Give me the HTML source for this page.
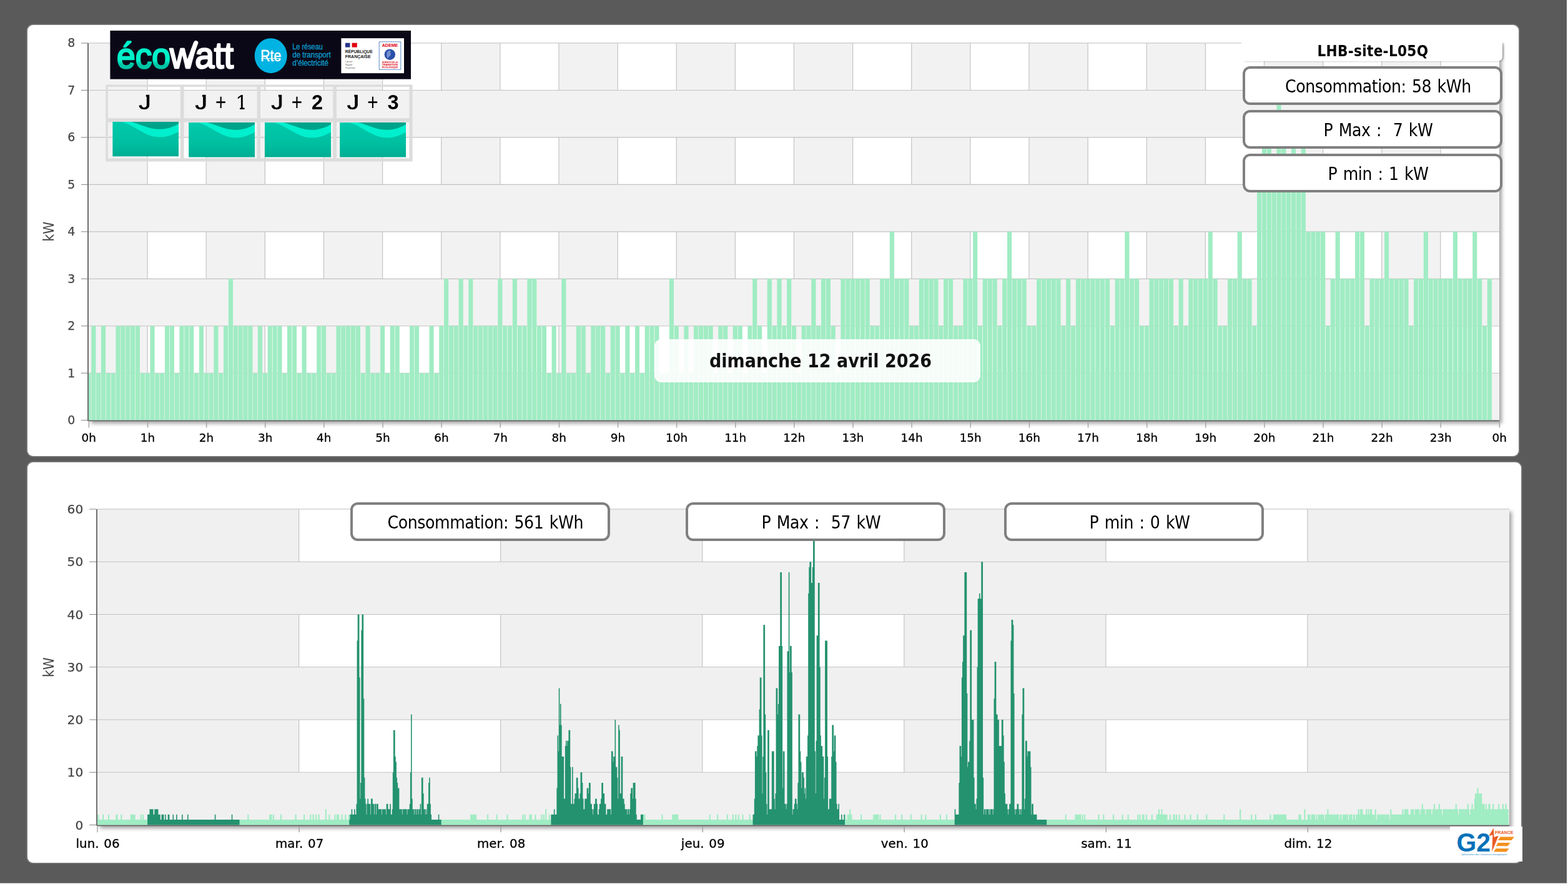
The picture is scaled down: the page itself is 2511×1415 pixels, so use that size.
<!DOCTYPE html>
<html lang="fr"><head><meta charset="utf-8"><title>Suivi consommation - LHB-site-L05Q</title>
<style>
html,body{margin:0;padding:0;}
body{width:2511px;height:1415px;overflow:hidden;background:#5a5a5a;position:relative;font-family:"DejaVu Sans Condensed","DejaVu Sans","Liberation Sans",sans-serif;}
.panel{position:absolute;background:#fff;border-radius:9px;box-shadow:0 0 0 1.6px #7d7d7d;}
#p1{left:43.8px;top:40px;width:2388.6px;height:690px;}
#p2{left:43.8px;top:740px;width:2392.4px;height:641px;}
.pshadow{position:absolute;box-shadow:4px 4px 6px rgba(0,0,0,.36);background:#fff;}
svg.chart{position:absolute;left:0;top:0;}
.stat,.gs{filter:grayscale(1);}
svg .gs{filter:grayscale(1);}
.stat{position:absolute;box-sizing:border-box;width:416px;height:62px;border:4px solid #808080;border-radius:12px;background:#fff;color:#000;font-size:28px;font-stretch:condensed;line-height:54px;white-space:pre;letter-spacing:-.4px;word-spacing:1.8px;}
.stat span{position:absolute;top:2px;}
.edge-r{position:absolute;right:0;top:0;width:1.9px;height:100%;background:#fff}
.edge-b{position:absolute;left:0;bottom:0;height:1px;width:100%;background:#fff}
</style></head><body>
<div class="panel" id="p1"></div><div class="panel" id="p2"></div>
<div class="pshadow" style="left:142px;top:69px;width:2259px;height:604.7px"></div>
<div class="pshadow" style="left:155.6px;top:815px;width:2261.4px;height:506.5px"></div>
<svg class="chart" width="2511" height="1415" viewBox="0 0 2511 1415">
<rect x="142" y="69" width="2259" height="603.7" fill="#fff"/>
<rect x="142" y="69" width="94.12" height="603.7" fill="#f2f2f2"/>
<rect x="330.25" y="69" width="94.12" height="603.7" fill="#f2f2f2"/>
<rect x="518.5" y="69" width="94.12" height="603.7" fill="#f2f2f2"/>
<rect x="706.75" y="69" width="94.12" height="603.7" fill="#f2f2f2"/>
<rect x="895" y="69" width="94.12" height="603.7" fill="#f2f2f2"/>
<rect x="1083.25" y="69" width="94.12" height="603.7" fill="#f2f2f2"/>
<rect x="1271.5" y="69" width="94.12" height="603.7" fill="#f2f2f2"/>
<rect x="1459.75" y="69" width="94.12" height="603.7" fill="#f2f2f2"/>
<rect x="1648" y="69" width="94.12" height="603.7" fill="#f2f2f2"/>
<rect x="1836.25" y="69" width="94.12" height="603.7" fill="#f2f2f2"/>
<rect x="2024.5" y="69" width="94.12" height="603.7" fill="#f2f2f2"/>
<rect x="2212.75" y="69" width="94.12" height="603.7" fill="#f2f2f2"/>
<path d="M236.12 69V672.7M330.25 69V672.7M424.38 69V672.7M518.5 69V672.7M612.62 69V672.7M706.75 69V672.7M800.88 69V672.7M895 69V672.7M989.12 69V672.7M1083.25 69V672.7M1177.38 69V672.7M1271.5 69V672.7M1365.62 69V672.7M1459.75 69V672.7M1553.88 69V672.7M1648 69V672.7M1742.12 69V672.7M1836.25 69V672.7M1930.38 69V672.7M2024.5 69V672.7M2118.62 69V672.7M2212.75 69V672.7M2306.88 69V672.7" stroke="#c2c2c2" stroke-width="1.15" fill="none"/>
<rect x="142" y="597.24" width="2259" height="75.46" fill="#f2f2f2"/>
<rect x="142" y="446.31" width="2259" height="75.46" fill="#f2f2f2"/>
<rect x="142" y="295.39" width="2259" height="75.46" fill="#f2f2f2"/>
<rect x="142" y="144.46" width="2259" height="75.46" fill="#f2f2f2"/>
<path d="M142 672.7H2401M142 597.24H2401M142 521.78H2401M142 446.31H2401M142 370.85H2401M142 295.39H2401M142 219.93H2401M142 144.46H2401M142 69H2401" stroke="#c2c2c2" stroke-width="1.15" fill="none"/>
<path d="M142 672.7V597.24H145.57V672.7zM146.27 672.7V521.78H153.42V672.7zM154.12 672.7V597.24H161.26V672.7zM161.96 672.7V521.78H169.1V672.7zM169.8 672.7V597.24H176.95V672.7zM177.65 672.7V597.24H184.79V672.7zM185.49 672.7V521.78H192.63V672.7zM193.33 672.7V521.78H200.48V672.7zM201.18 672.7V521.78H208.32V672.7zM209.02 672.7V521.78H216.17V672.7zM216.87 672.7V521.78H224.01V672.7zM224.71 672.7V597.24H231.85V672.7zM232.55 672.7V597.24H239.7V672.7zM240.4 672.7V521.78H247.54V672.7zM248.24 672.7V597.24H255.38V672.7zM256.08 672.7V597.24H263.23V672.7zM263.93 672.7V521.78H271.07V672.7zM271.77 672.7V521.78H278.92V672.7zM279.62 672.7V597.24H286.76V672.7zM287.46 672.7V521.78H294.6V672.7zM295.3 672.7V521.78H302.45V672.7zM303.15 672.7V521.78H310.29V672.7zM310.99 672.7V597.24H318.13V672.7zM318.83 672.7V521.78H325.98V672.7zM326.68 672.7V597.24H333.82V672.7zM334.52 672.7V597.24H341.67V672.7zM342.37 672.7V521.78H349.51V672.7zM350.21 672.7V597.24H357.35V672.7zM358.05 672.7V521.78H365.2V672.7zM365.9 672.7V446.31H373.04V672.7zM373.74 672.7V521.78H380.88V672.7zM381.58 672.7V521.78H388.73V672.7zM389.43 672.7V521.78H396.57V672.7zM397.27 672.7V521.78H404.42V672.7zM405.12 672.7V597.24H412.26V672.7zM412.96 672.7V521.78H420.1V672.7zM420.8 672.7V597.24H427.95V672.7zM428.65 672.7V521.78H435.79V672.7zM436.49 672.7V521.78H443.63V672.7zM444.33 672.7V521.78H451.48V672.7zM452.18 672.7V597.24H459.32V672.7zM460.02 672.7V521.78H467.17V672.7zM467.87 672.7V521.78H475.01V672.7zM475.71 672.7V597.24H482.85V672.7zM483.55 672.7V521.78H490.7V672.7zM491.4 672.7V597.24H498.54V672.7zM499.24 672.7V597.24H506.38V672.7zM507.08 672.7V521.78H514.23V672.7zM514.93 672.7V521.78H522.07V672.7zM522.77 672.7V597.24H529.92V672.7zM530.62 672.7V597.24H537.76V672.7zM538.46 672.7V521.78H545.6V672.7zM546.3 672.7V521.78H553.45V672.7zM554.15 672.7V521.78H561.29V672.7zM561.99 672.7V521.78H569.13V672.7zM569.83 672.7V521.78H576.98V672.7zM577.68 672.7V597.24H584.82V672.7zM585.52 672.7V521.78H592.67V672.7zM593.37 672.7V597.24H600.51V672.7zM601.21 672.7V597.24H608.35V672.7zM609.05 672.7V521.78H616.2V672.7zM616.9 672.7V597.24H624.04V672.7zM624.74 672.7V521.78H631.88V672.7zM632.58 672.7V521.78H639.73V672.7zM640.43 672.7V597.24H647.57V672.7zM648.27 672.7V597.24H655.42V672.7zM656.12 672.7V521.78H663.26V672.7zM663.96 672.7V521.78H671.1V672.7zM671.8 672.7V597.24H678.95V672.7zM679.65 672.7V597.24H686.79V672.7zM687.49 672.7V521.78H694.63V672.7zM695.33 672.7V597.24H702.48V672.7zM703.18 672.7V521.78H710.32V672.7zM711.02 672.7V446.31H718.17V672.7zM718.87 672.7V521.78H726.01V672.7zM726.71 672.7V521.78H733.85V672.7zM734.55 672.7V446.31H741.7V672.7zM742.4 672.7V521.78H749.54V672.7zM750.24 672.7V446.31H757.38V672.7zM758.08 672.7V521.78H765.23V672.7zM765.93 672.7V521.78H773.07V672.7zM773.77 672.7V521.78H780.92V672.7zM781.62 672.7V521.78H788.76V672.7zM789.46 672.7V521.78H796.6V672.7zM797.3 672.7V446.31H804.45V672.7zM805.15 672.7V521.78H812.29V672.7zM812.99 672.7V521.78H820.13V672.7zM820.83 672.7V446.31H827.98V672.7zM828.68 672.7V521.78H835.82V672.7zM836.52 672.7V521.78H843.67V672.7zM844.37 672.7V446.31H851.51V672.7zM852.21 672.7V446.31H859.35V672.7zM860.05 672.7V521.78H867.2V672.7zM867.9 672.7V521.78H875.04V672.7zM875.74 672.7V597.24H882.88V672.7zM883.58 672.7V521.78H890.73V672.7zM891.43 672.7V597.24H898.57V672.7zM899.27 672.7V446.31H906.42V672.7zM907.12 672.7V597.24H914.26V672.7zM914.96 672.7V597.24H922.1V672.7zM922.8 672.7V521.78H929.95V672.7zM930.65 672.7V521.78H937.79V672.7zM938.49 672.7V597.24H945.63V672.7zM946.33 672.7V521.78H953.48V672.7zM954.18 672.7V521.78H961.32V672.7zM962.02 672.7V521.78H969.17V672.7zM969.87 672.7V597.24H977.01V672.7zM977.71 672.7V521.78H984.85V672.7zM985.55 672.7V521.78H992.7V672.7zM993.4 672.7V597.24H1000.54V672.7zM1001.24 672.7V521.78H1008.38V672.7zM1009.08 672.7V597.24H1016.23V672.7zM1016.93 672.7V521.78H1024.07V672.7zM1024.77 672.7V597.24H1031.92V672.7zM1032.62 672.7V521.78H1039.76V672.7zM1040.46 672.7V521.78H1047.6V672.7zM1048.3 672.7V521.78H1055.45V672.7zM1056.15 672.7V597.24H1063.29V672.7zM1063.99 672.7V597.24H1071.13V672.7zM1071.83 672.7V446.31H1078.98V672.7zM1079.68 672.7V521.78H1086.82V672.7zM1087.52 672.7V597.24H1094.67V672.7zM1095.37 672.7V521.78H1102.51V672.7zM1103.21 672.7V597.24H1110.35V672.7zM1111.05 672.7V521.78H1118.2V672.7zM1118.9 672.7V521.78H1126.04V672.7zM1126.74 672.7V521.78H1133.88V672.7zM1134.58 672.7V521.78H1141.73V672.7zM1142.43 672.7V597.24H1149.57V672.7zM1150.27 672.7V521.78H1157.42V672.7zM1158.12 672.7V521.78H1165.26V672.7zM1165.96 672.7V597.24H1173.1V672.7zM1173.8 672.7V521.78H1180.95V672.7zM1181.65 672.7V521.78H1188.79V672.7zM1189.49 672.7V597.24H1196.63V672.7zM1197.33 672.7V521.78H1204.48V672.7zM1205.18 672.7V446.31H1212.32V672.7zM1213.02 672.7V521.78H1220.17V672.7zM1220.87 672.7V597.24H1228.01V672.7zM1228.71 672.7V446.31H1235.85V672.7zM1236.55 672.7V521.78H1243.7V672.7zM1244.4 672.7V446.31H1251.54V672.7zM1252.24 672.7V521.78H1259.38V672.7zM1260.08 672.7V446.31H1267.23V672.7zM1267.93 672.7V521.78H1275.07V672.7zM1275.77 672.7V597.24H1282.92V672.7zM1283.62 672.7V521.78H1290.76V672.7zM1291.46 672.7V521.78H1298.6V672.7zM1299.3 672.7V446.31H1306.45V672.7zM1307.15 672.7V521.78H1314.29V672.7zM1314.99 672.7V446.31H1322.13V672.7zM1322.83 672.7V446.31H1329.98V672.7zM1330.68 672.7V521.78H1337.82V672.7zM1338.52 672.7V597.24H1345.67V672.7zM1346.37 672.7V446.31H1353.51V672.7zM1354.21 672.7V446.31H1361.35V672.7zM1362.05 672.7V446.31H1369.2V672.7zM1369.9 672.7V446.31H1377.04V672.7zM1377.74 672.7V446.31H1384.88V672.7zM1385.58 672.7V446.31H1392.73V672.7zM1393.43 672.7V521.78H1400.57V672.7zM1401.27 672.7V521.78H1408.42V672.7zM1409.12 672.7V446.31H1416.26V672.7zM1416.96 672.7V446.31H1424.1V672.7zM1424.8 672.7V370.85H1431.95V672.7zM1432.65 672.7V446.31H1439.79V672.7zM1440.49 672.7V446.31H1447.63V672.7zM1448.33 672.7V446.31H1455.48V672.7zM1456.18 672.7V521.78H1463.32V672.7zM1464.02 672.7V521.78H1471.17V672.7zM1471.87 672.7V446.31H1479.01V672.7zM1479.71 672.7V446.31H1486.85V672.7zM1487.55 672.7V446.31H1494.7V672.7zM1495.4 672.7V446.31H1502.54V672.7zM1503.24 672.7V521.78H1510.38V672.7zM1511.08 672.7V446.31H1518.23V672.7zM1518.93 672.7V446.31H1526.07V672.7zM1526.77 672.7V521.78H1533.92V672.7zM1534.62 672.7V521.78H1541.76V672.7zM1542.46 672.7V446.31H1549.6V672.7zM1550.3 672.7V446.31H1557.45V672.7zM1558.15 672.7V370.85H1565.29V672.7zM1565.99 672.7V521.78H1573.13V672.7zM1573.83 672.7V446.31H1580.98V672.7zM1581.68 672.7V446.31H1588.82V672.7zM1589.52 672.7V446.31H1596.67V672.7zM1597.37 672.7V521.78H1604.51V672.7zM1605.21 672.7V446.31H1612.35V672.7zM1613.05 672.7V370.85H1620.2V672.7zM1620.9 672.7V446.31H1628.04V672.7zM1628.74 672.7V446.31H1635.88V672.7zM1636.58 672.7V446.31H1643.73V672.7zM1644.43 672.7V521.78H1651.57V672.7zM1652.27 672.7V521.78H1659.42V672.7zM1660.12 672.7V446.31H1667.26V672.7zM1667.96 672.7V446.31H1675.1V672.7zM1675.8 672.7V446.31H1682.95V672.7zM1683.65 672.7V446.31H1690.79V672.7zM1691.49 672.7V446.31H1698.63V672.7zM1699.33 672.7V521.78H1706.48V672.7zM1707.18 672.7V446.31H1714.32V672.7zM1715.02 672.7V521.78H1722.17V672.7zM1722.87 672.7V446.31H1730.01V672.7zM1730.71 672.7V446.31H1737.85V672.7zM1738.55 672.7V446.31H1745.7V672.7zM1746.4 672.7V446.31H1753.54V672.7zM1754.24 672.7V446.31H1761.38V672.7zM1762.08 672.7V446.31H1769.23V672.7zM1769.93 672.7V446.31H1777.07V672.7zM1777.77 672.7V521.78H1784.92V672.7zM1785.62 672.7V446.31H1792.76V672.7zM1793.46 672.7V446.31H1800.6V672.7zM1801.3 672.7V370.85H1808.45V672.7zM1809.15 672.7V446.31H1816.29V672.7zM1816.99 672.7V446.31H1824.13V672.7zM1824.83 672.7V521.78H1831.98V672.7zM1832.68 672.7V521.78H1839.82V672.7zM1840.52 672.7V446.31H1847.67V672.7zM1848.37 672.7V446.31H1855.51V672.7zM1856.21 672.7V446.31H1863.35V672.7zM1864.05 672.7V446.31H1871.2V672.7zM1871.9 672.7V446.31H1879.04V672.7zM1879.74 672.7V521.78H1886.88V672.7zM1887.58 672.7V446.31H1894.73V672.7zM1895.43 672.7V521.78H1902.57V672.7zM1903.27 672.7V446.31H1910.42V672.7zM1911.12 672.7V446.31H1918.26V672.7zM1918.96 672.7V446.31H1926.1V672.7zM1926.8 672.7V446.31H1933.95V672.7zM1934.65 672.7V370.85H1941.79V672.7zM1942.49 672.7V446.31H1949.63V672.7zM1950.33 672.7V521.78H1957.48V672.7zM1958.18 672.7V521.78H1965.32V672.7zM1966.02 672.7V446.31H1973.17V672.7zM1973.87 672.7V446.31H1981.01V672.7zM1981.71 672.7V370.85H1988.85V672.7zM1989.55 672.7V446.31H1996.7V672.7zM1997.4 672.7V446.31H2004.54V672.7zM2005.24 672.7V521.78H2012.38V672.7zM2013.08 672.7V295.39H2020.23V672.7zM2020.93 672.7V219.93H2028.07V672.7zM2028.77 672.7V219.93H2035.92V672.7zM2036.62 672.7V295.39H2043.76V672.7zM2044.46 672.7V144.46H2051.6V672.7zM2052.3 672.7V219.93H2059.45V672.7zM2060.15 672.7V295.39H2067.29V672.7zM2067.99 672.7V219.93H2075.13V672.7zM2075.83 672.7V295.39H2082.98V672.7zM2083.68 672.7V219.93H2090.82V672.7zM2091.52 672.7V370.85H2098.67V672.7zM2099.37 672.7V370.85H2106.51V672.7zM2107.21 672.7V370.85H2114.35V672.7zM2115.05 672.7V370.85H2122.2V672.7zM2122.9 672.7V521.78H2130.04V672.7zM2130.74 672.7V446.31H2137.88V672.7zM2138.58 672.7V370.85H2145.73V672.7zM2146.43 672.7V446.31H2153.57V672.7zM2154.27 672.7V446.31H2161.42V672.7zM2162.12 672.7V446.31H2169.26V672.7zM2169.96 672.7V370.85H2177.1V672.7zM2177.8 672.7V370.85H2184.95V672.7zM2185.65 672.7V521.78H2192.79V672.7zM2193.49 672.7V446.31H2200.63V672.7zM2201.33 672.7V446.31H2208.48V672.7zM2209.18 672.7V446.31H2216.32V672.7zM2217.02 672.7V370.85H2224.17V672.7zM2224.87 672.7V446.31H2232.01V672.7zM2232.71 672.7V446.31H2239.85V672.7zM2240.55 672.7V446.31H2247.7V672.7zM2248.4 672.7V446.31H2255.54V672.7zM2256.24 672.7V521.78H2263.38V672.7zM2264.08 672.7V446.31H2271.23V672.7zM2271.93 672.7V446.31H2279.07V672.7zM2279.77 672.7V370.85H2286.92V672.7zM2287.62 672.7V446.31H2294.76V672.7zM2295.46 672.7V446.31H2302.6V672.7zM2303.3 672.7V446.31H2310.45V672.7zM2311.15 672.7V446.31H2318.29V672.7zM2318.99 672.7V446.31H2326.13V672.7zM2326.83 672.7V370.85H2333.98V672.7zM2334.68 672.7V446.31H2341.82V672.7zM2342.52 672.7V446.31H2349.67V672.7zM2350.37 672.7V446.31H2357.51V672.7zM2358.21 672.7V370.85H2365.35V672.7zM2366.05 672.7V446.31H2373.2V672.7zM2373.9 672.7V521.78H2381.04V672.7zM2381.74 672.7V446.31H2388.88V672.7z" fill="#a0ecc3"/>
<path d="M130 672.7H141M130 597.24H141M130 521.78H141M130 446.31H141M130 370.85H141M130 295.39H141M130 219.93H141M130 144.46H141M130 69H141" stroke="#7c7c7c" stroke-width=".95" fill="none"/>
<path d="M142.4 674.2V684.5M236.53 674.2V684.5M330.65 674.2V684.5M424.77 674.2V684.5M518.9 674.2V684.5M613.02 674.2V684.5M707.15 674.2V684.5M801.27 674.2V684.5M895.4 674.2V684.5M989.52 674.2V684.5M1083.65 674.2V684.5M1177.78 674.2V684.5M1271.9 674.2V684.5M1366.03 674.2V684.5M1460.15 674.2V684.5M1554.28 674.2V684.5M1648.4 674.2V684.5M1742.53 674.2V684.5M1836.65 674.2V684.5M1930.78 674.2V684.5M2024.9 674.2V684.5M2119.03 674.2V684.5M2213.15 674.2V684.5M2307.28 674.2V684.5M2401.4 674.2V684.5" stroke="#a6a6a6" stroke-width="1.5" fill="none"/>
<path d="M141 69V673.9" stroke="#6f6f6f" stroke-width="2" fill="none"/>
<path d="M142 673.5H2401" stroke="#5e5e5e" stroke-width="1.3" fill="none"/>
<g class="gs" font-family="'DejaVu Sans','Liberation Sans',sans-serif" font-size="18.9" fill="#444444" stroke="#444444" stroke-width=".25" text-anchor="end">
<text x="120.4" y="679.1">0</text>
<text x="120.4" y="603.64">1</text>
<text x="120.4" y="528.18">2</text>
<text x="120.4" y="452.71">3</text>
<text x="120.4" y="377.25">4</text>
<text x="120.4" y="301.79">5</text>
<text x="120.4" y="226.33">6</text>
<text x="120.4" y="150.86">7</text>
<text x="120.4" y="75.4">8</text>
</g>
<g class="gs" font-family="'DejaVu Sans','Liberation Sans',sans-serif" font-size="18.4" fill="#000" stroke="#000" stroke-width=".3" text-anchor="middle">
<text x="142.3" y="707.2">0h</text>
<text x="236.43" y="707.2">1h</text>
<text x="330.55" y="707.2">2h</text>
<text x="424.68" y="707.2">3h</text>
<text x="518.8" y="707.2">4h</text>
<text x="612.92" y="707.2">5h</text>
<text x="707.05" y="707.2">6h</text>
<text x="801.17" y="707.2">7h</text>
<text x="895.3" y="707.2">8h</text>
<text x="989.42" y="707.2">9h</text>
<text x="1083.55" y="707.2">10h</text>
<text x="1177.67" y="707.2">11h</text>
<text x="1271.8" y="707.2">12h</text>
<text x="1365.92" y="707.2">13h</text>
<text x="1460.05" y="707.2">14h</text>
<text x="1554.17" y="707.2">15h</text>
<text x="1648.3" y="707.2">16h</text>
<text x="1742.42" y="707.2">17h</text>
<text x="1836.55" y="707.2">18h</text>
<text x="1930.67" y="707.2">19h</text>
<text x="2024.8" y="707.2">20h</text>
<text x="2118.93" y="707.2">21h</text>
<text x="2213.05" y="707.2">22h</text>
<text x="2307.18" y="707.2">23h</text>
<text x="2401.3" y="707.2">0h</text>
</g>
<text class="gs" transform="translate(86.3 370.5) rotate(-90)" font-family="'DejaVu Sans Condensed','DejaVu Sans',sans-serif" font-stretch="condensed" font-size="22.5" fill="#444444" text-anchor="middle">kW</text>
<rect x="155.6" y="815" width="2261.4" height="505.5" fill="#fff"/>
<rect x="155.6" y="815" width="323.06" height="505.5" fill="#f0f0f0"/>
<rect x="801.71" y="815" width="323.06" height="505.5" fill="#f0f0f0"/>
<rect x="1447.83" y="815" width="323.06" height="505.5" fill="#f0f0f0"/>
<rect x="2093.94" y="815" width="323.06" height="505.5" fill="#f0f0f0"/>
<path d="M478.66 815V1320.5M801.71 815V1320.5M1124.77 815V1320.5M1447.83 815V1320.5M1770.89 815V1320.5M2093.94 815V1320.5" stroke="#c2c2c2" stroke-width="1.15" fill="none"/>
<rect x="155.6" y="1236.25" width="2261.4" height="84.25" fill="#f0f0f0"/>
<rect x="155.6" y="1067.75" width="2261.4" height="84.25" fill="#f0f0f0"/>
<rect x="155.6" y="899.25" width="2261.4" height="84.25" fill="#f0f0f0"/>
<path d="M155.6 1320.5H2417M155.6 1236.25H2417M155.6 1152H2417M155.6 1067.75H2417M155.6 983.5H2417M155.6 899.25H2417M155.6 815H2417" stroke="#c2c2c2" stroke-width="1.15" fill="none"/>
<path d="M156 1320.5V1312.08H157.18V1320.5zM156.18 1320.5V1303.65H158.31V1320.5zM157.31 1320.5V1312.08H165.04V1320.5zM164.04 1320.5V1303.65H166.16V1320.5zM165.16 1320.5V1312.08H174.01V1320.5zM173.01 1320.5V1303.65H175.14V1320.5zM174.14 1320.5V1312.08H186.36V1320.5zM185.36 1320.5V1303.65H188.6V1320.5zM187.6 1320.5V1312.08H194.21V1320.5zM193.21 1320.5V1303.65H195.33V1320.5zM194.33 1320.5V1312.08H209.92V1320.5zM208.92 1320.5V1303.65H213.28V1320.5zM212.28 1320.5V1312.08H214.41V1320.5zM213.41 1320.5V1303.65H216.65V1320.5zM215.65 1320.5V1312.08H225.63V1320.5zM224.63 1320.5V1303.65H226.75V1320.5zM225.75 1320.5V1312.08H228.99V1320.5zM227.99 1320.5V1303.65H230.11V1320.5zM229.11 1320.5V1312.08H236.85V1320.5zM382.83 1320.5V1312.08H397.3V1320.5zM396.3 1320.5V1303.65H398.42V1320.5zM397.42 1320.5V1312.08H432.08V1320.5zM431.08 1320.5V1303.65H433.2V1320.5zM432.2 1320.5V1312.08H434.32V1320.5zM433.32 1320.5V1303.65H435.44V1320.5zM434.44 1320.5V1312.08H437.69V1320.5zM436.69 1320.5V1303.65H438.81V1320.5zM437.81 1320.5V1312.08H450.03V1320.5zM449.03 1320.5V1303.65H451.15V1320.5zM450.15 1320.5V1312.08H473.59V1320.5zM472.59 1320.5V1303.65H474.72V1320.5zM473.72 1320.5V1312.08H487.06V1320.5zM486.06 1320.5V1303.65H488.18V1320.5zM487.18 1320.5V1312.08H497.16V1320.5zM496.16 1320.5V1303.65H498.28V1320.5zM497.28 1320.5V1312.08H501.64V1320.5zM500.64 1320.5V1303.65H502.77V1320.5zM501.77 1320.5V1312.08H506.13V1320.5zM505.13 1320.5V1303.65H507.25V1320.5zM506.25 1320.5V1312.08H510.62V1320.5zM509.62 1320.5V1303.65H511.74V1320.5zM510.74 1320.5V1312.08H521.84V1320.5zM520.84 1320.5V1295.22H522.96V1320.5zM521.96 1320.5V1312.08H527.45V1320.5zM526.45 1320.5V1303.65H528.57V1320.5zM527.57 1320.5V1312.08H536.43V1320.5zM535.43 1320.5V1303.65H537.55V1320.5zM536.55 1320.5V1312.08H539.79V1320.5zM538.79 1320.5V1303.65H540.92V1320.5zM539.92 1320.5V1312.08H542.04V1320.5zM541.04 1320.5V1303.65H543.16V1320.5zM542.16 1320.5V1312.08H547.65V1320.5zM546.65 1320.5V1303.65H548.77V1320.5zM547.77 1320.5V1312.08H553.26V1320.5zM552.26 1320.5V1303.65H554.38V1320.5zM553.38 1320.5V1312.08H558.87V1320.5zM557.87 1320.5V1303.65H559.99V1320.5zM705.97 1320.5V1312.08H754.1V1320.5zM753.1 1320.5V1303.65H756.34V1320.5zM755.34 1320.5V1312.08H757.47V1320.5zM756.47 1320.5V1303.65H760.83V1320.5zM759.83 1320.5V1312.08H761.95V1320.5zM760.95 1320.5V1303.65H763.08V1320.5zM762.08 1320.5V1312.08H781.03V1320.5zM780.03 1320.5V1303.65H782.15V1320.5zM781.15 1320.5V1312.08H795.61V1320.5zM794.61 1320.5V1303.65H796.74V1320.5zM795.74 1320.5V1312.08H812.44V1320.5zM811.44 1320.5V1303.65H813.57V1320.5zM812.57 1320.5V1312.08H837.13V1320.5zM836.13 1320.5V1303.65H838.25V1320.5zM837.25 1320.5V1312.08H840.5V1320.5zM839.5 1320.5V1303.65H841.62V1320.5zM840.62 1320.5V1312.08H848.35V1320.5zM847.35 1320.5V1303.65H849.47V1320.5zM848.47 1320.5V1312.08H850.59V1320.5zM849.59 1320.5V1303.65H851.72V1320.5zM850.72 1320.5V1312.08H857.33V1320.5zM856.33 1320.5V1303.65H858.45V1320.5zM857.45 1320.5V1312.08H867.42V1320.5zM866.42 1320.5V1303.65H868.55V1320.5zM867.55 1320.5V1312.08H870.79V1320.5zM869.79 1320.5V1303.65H871.91V1320.5zM870.91 1320.5V1312.08H874.16V1320.5zM873.16 1320.5V1295.22H875.28V1320.5zM874.28 1320.5V1312.08H879.77V1320.5zM878.77 1320.5V1303.65H880.89V1320.5zM879.89 1320.5V1312.08H883.13V1320.5zM1029.12 1320.5V1303.65H1033.48V1320.5zM1032.48 1320.5V1312.08H1060.41V1320.5zM1059.41 1320.5V1303.65H1061.53V1320.5zM1060.53 1320.5V1312.08H1077.24V1320.5zM1076.24 1320.5V1303.65H1078.36V1320.5zM1077.36 1320.5V1312.08H1079.49V1320.5zM1078.49 1320.5V1303.65H1082.85V1320.5zM1081.85 1320.5V1312.08H1083.97V1320.5zM1082.97 1320.5V1303.65H1086.22V1320.5zM1085.22 1320.5V1312.08H1136.71V1320.5zM1135.71 1320.5V1303.65H1137.83V1320.5zM1136.83 1320.5V1312.08H1149.05V1320.5zM1148.05 1320.5V1303.65H1150.17V1320.5zM1149.17 1320.5V1312.08H1164.76V1320.5zM1163.76 1320.5V1303.65H1165.88V1320.5zM1164.88 1320.5V1312.08H1173.74V1320.5zM1172.74 1320.5V1303.65H1174.86V1320.5zM1173.86 1320.5V1312.08H1178.22V1320.5zM1177.22 1320.5V1303.65H1179.35V1320.5zM1178.35 1320.5V1312.08H1182.71V1320.5zM1181.71 1320.5V1303.65H1183.83V1320.5zM1182.83 1320.5V1312.08H1189.44V1320.5zM1188.44 1320.5V1303.65H1190.57V1320.5zM1189.57 1320.5V1312.08H1200.67V1320.5zM1199.67 1320.5V1303.65H1201.79V1320.5zM1200.79 1320.5V1312.08H1206.28V1320.5zM1352.26 1320.5V1303.65H1354.38V1320.5zM1353.38 1320.5V1312.08H1357.75V1320.5zM1356.75 1320.5V1303.65H1359.99V1320.5zM1358.99 1320.5V1312.08H1361.11V1320.5zM1360.11 1320.5V1295.22H1362.24V1320.5zM1361.24 1320.5V1303.65H1364.48V1320.5zM1363.48 1320.5V1312.08H1379.07V1320.5zM1378.07 1320.5V1303.65H1380.19V1320.5zM1379.19 1320.5V1312.08H1399.26V1320.5zM1398.26 1320.5V1303.65H1401.51V1320.5zM1400.51 1320.5V1312.08H1402.63V1320.5zM1401.63 1320.5V1303.65H1407.12V1320.5zM1406.12 1320.5V1312.08H1409.36V1320.5zM1408.36 1320.5V1303.65H1410.48V1320.5zM1409.48 1320.5V1312.08H1434.05V1320.5zM1433.05 1320.5V1303.65H1435.17V1320.5zM1434.17 1320.5V1312.08H1444.14V1320.5zM1443.14 1320.5V1303.65H1445.27V1320.5zM1444.27 1320.5V1312.08H1458.73V1320.5zM1457.73 1320.5V1303.65H1459.85V1320.5zM1458.85 1320.5V1312.08H1475.56V1320.5zM1474.56 1320.5V1303.65H1476.68V1320.5zM1475.68 1320.5V1312.08H1482.29V1320.5zM1481.29 1320.5V1303.65H1483.42V1320.5zM1482.42 1320.5V1312.08H1505.86V1320.5zM1504.86 1320.5V1303.65H1506.98V1320.5zM1505.98 1320.5V1312.08H1515.95V1320.5zM1514.95 1320.5V1303.65H1517.08V1320.5zM1516.08 1320.5V1312.08H1529.42V1320.5zM1675.4 1320.5V1312.08H1706.7V1320.5zM1705.7 1320.5V1303.65H1707.82V1320.5zM1706.82 1320.5V1312.08H1722.41V1320.5zM1721.41 1320.5V1303.65H1723.53V1320.5zM1722.53 1320.5V1312.08H1724.65V1320.5zM1723.65 1320.5V1303.65H1726.89V1320.5zM1725.89 1320.5V1312.08H1728.02V1320.5zM1727.02 1320.5V1303.65H1731.38V1320.5zM1730.38 1320.5V1312.08H1733.63V1320.5zM1732.63 1320.5V1303.65H1734.75V1320.5zM1733.75 1320.5V1312.08H1736.99V1320.5zM1735.99 1320.5V1303.65H1738.11V1320.5zM1737.11 1320.5V1312.08H1759.43V1320.5zM1758.43 1320.5V1303.65H1760.56V1320.5zM1759.56 1320.5V1312.08H1767.29V1320.5zM1766.29 1320.5V1303.65H1768.41V1320.5zM1767.41 1320.5V1312.08H1783V1320.5zM1782 1320.5V1303.65H1784.12V1320.5zM1783.12 1320.5V1312.08H1797.58V1320.5zM1796.58 1320.5V1303.65H1798.7V1320.5zM1797.7 1320.5V1312.08H1806.56V1320.5zM1805.56 1320.5V1303.65H1807.68V1320.5zM1806.68 1320.5V1312.08H1822.27V1320.5zM1821.27 1320.5V1303.65H1823.39V1320.5zM1822.39 1320.5V1312.08H1825.63V1320.5zM1824.63 1320.5V1303.65H1826.75V1320.5zM1825.75 1320.5V1312.08H1830.12V1320.5zM1829.12 1320.5V1303.65H1832.36V1320.5zM1831.36 1320.5V1312.08H1835.73V1320.5zM1834.73 1320.5V1303.65H1836.85V1320.5zM1835.85 1320.5V1312.08H1844.71V1320.5zM1843.71 1320.5V1303.65H1845.83V1320.5zM1844.83 1320.5V1312.08H1852.56V1320.5zM1851.56 1320.5V1303.65H1855.93V1320.5zM1854.93 1320.5V1295.22H1857.05V1320.5zM1856.05 1320.5V1303.65H1860.42V1320.5zM1859.42 1320.5V1295.22H1861.54V1320.5zM1860.54 1320.5V1303.65H1869.39V1320.5zM1868.39 1320.5V1312.08H1873.88V1320.5zM1872.88 1320.5V1303.65H1875V1320.5zM1874 1320.5V1312.08H1879.49V1320.5zM1878.49 1320.5V1303.65H1881.73V1320.5zM1880.73 1320.5V1312.08H1883.98V1320.5zM1882.98 1320.5V1303.65H1885.1V1320.5zM1884.1 1320.5V1312.08H1888.47V1320.5zM1887.47 1320.5V1303.65H1889.59V1320.5zM1888.59 1320.5V1312.08H1897.44V1320.5zM1896.44 1320.5V1303.65H1898.56V1320.5zM1897.56 1320.5V1312.08H1906.42V1320.5zM1905.42 1320.5V1303.65H1907.54V1320.5zM1906.54 1320.5V1312.08H1917.64V1320.5zM1916.64 1320.5V1303.65H1918.76V1320.5zM1917.76 1320.5V1312.08H1932.22V1320.5zM1931.22 1320.5V1303.65H1933.35V1320.5zM1932.35 1320.5V1312.08H1960.28V1320.5zM1959.28 1320.5V1303.65H1961.4V1320.5zM1960.4 1320.5V1312.08H1986.08V1320.5zM1985.08 1320.5V1295.22H1987.2V1320.5zM1986.2 1320.5V1312.08H2004.03V1320.5zM2003.03 1320.5V1303.65H2005.16V1320.5zM2004.16 1320.5V1312.08H2010.77V1320.5zM2009.77 1320.5V1303.65H2011.89V1320.5zM2010.89 1320.5V1312.08H2034.33V1320.5zM2033.33 1320.5V1303.65H2035.45V1320.5zM2034.45 1320.5V1312.08H2039.94V1320.5zM2038.94 1320.5V1303.65H2054.53V1320.5zM2053.53 1320.5V1312.08H2055.65V1320.5zM2054.65 1320.5V1303.65H2060.14V1320.5zM2059.14 1320.5V1312.08H2080.33V1320.5zM2079.33 1320.5V1303.65H2081.45V1320.5zM2080.45 1320.5V1312.08H2082.58V1320.5zM2081.58 1320.5V1303.65H2083.7V1320.5zM2082.7 1320.5V1312.08H2089.31V1320.5zM2088.31 1320.5V1295.22H2090.43V1320.5zM2089.43 1320.5V1312.08H2094.92V1320.5zM2093.92 1320.5V1303.65H2096.04V1320.5zM2095.04 1320.5V1312.08H2097.16V1320.5zM2096.16 1320.5V1303.65H2098.28V1320.5zM2097.28 1320.5V1312.08H2100.53V1320.5zM2099.53 1320.5V1303.65H2106.14V1320.5zM2105.14 1320.5V1312.08H2108.38V1320.5zM2107.38 1320.5V1303.65H2109.5V1320.5zM2108.5 1320.5V1312.08H2111.75V1320.5zM2110.75 1320.5V1303.65H2113.99V1320.5zM2112.99 1320.5V1312.08H2115.11V1320.5zM2114.11 1320.5V1303.65H2118.48V1320.5zM2117.48 1320.5V1312.08H2119.6V1320.5zM2118.6 1320.5V1303.65H2120.72V1320.5zM2119.72 1320.5V1312.08H2122.97V1320.5zM2121.97 1320.5V1303.65H2124.09V1320.5zM2123.09 1320.5V1312.08H2125.21V1320.5zM2124.21 1320.5V1303.65H2126.33V1320.5zM2125.33 1320.5V1295.22H2127.46V1320.5zM2126.46 1320.5V1303.65H2131.94V1320.5zM2130.94 1320.5V1312.08H2133.07V1320.5zM2132.07 1320.5V1303.65H2134.19V1320.5zM2133.19 1320.5V1312.08H2135.31V1320.5zM2134.31 1320.5V1303.65H2138.68V1320.5zM2137.68 1320.5V1312.08H2139.8V1320.5zM2138.8 1320.5V1303.65H2142.04V1320.5zM2141.04 1320.5V1312.08H2143.17V1320.5zM2142.17 1320.5V1303.65H2144.29V1320.5zM2143.29 1320.5V1312.08H2146.53V1320.5zM2145.53 1320.5V1303.65H2148.78V1320.5zM2147.78 1320.5V1312.08H2151.02V1320.5zM2150.02 1320.5V1303.65H2156.63V1320.5zM2155.63 1320.5V1312.08H2157.75V1320.5zM2156.75 1320.5V1303.65H2158.87V1320.5zM2157.87 1320.5V1312.08H2161.12V1320.5zM2160.12 1320.5V1303.65H2162.24V1320.5zM2161.24 1320.5V1312.08H2163.36V1320.5zM2162.36 1320.5V1303.65H2165.61V1320.5zM2164.61 1320.5V1312.08H2167.85V1320.5zM2166.85 1320.5V1303.65H2170.09V1320.5zM2169.09 1320.5V1312.08H2172.34V1320.5zM2171.34 1320.5V1303.65H2173.46V1320.5zM2172.46 1320.5V1312.08H2174.58V1320.5zM2173.58 1320.5V1303.65H2175.7V1320.5zM2174.7 1320.5V1295.22H2176.83V1320.5zM2175.83 1320.5V1303.65H2179.07V1320.5zM2178.07 1320.5V1295.22H2180.19V1320.5zM2179.19 1320.5V1303.65H2181.31V1320.5zM2180.31 1320.5V1295.22H2182.44V1320.5zM2181.44 1320.5V1303.65H2188.05V1320.5zM2187.05 1320.5V1295.22H2189.17V1320.5zM2188.17 1320.5V1303.65H2191.41V1320.5zM2190.41 1320.5V1295.22H2192.53V1320.5zM2191.53 1320.5V1303.65H2194.78V1320.5zM2193.78 1320.5V1295.22H2197.02V1320.5zM2196.02 1320.5V1303.65H2199.27V1320.5zM2198.27 1320.5V1312.08H2200.39V1320.5zM2199.39 1320.5V1303.65H2201.51V1320.5zM2200.51 1320.5V1312.08H2202.63V1320.5zM2201.63 1320.5V1295.22H2203.75V1320.5zM2202.75 1320.5V1312.08H2206V1320.5zM2205 1320.5V1303.65H2208.24V1320.5zM2207.24 1320.5V1312.08H2209.36V1320.5zM2208.36 1320.5V1303.65H2212.73V1320.5zM2211.73 1320.5V1312.08H2213.85V1320.5zM2212.85 1320.5V1303.65H2216.1V1320.5zM2215.1 1320.5V1312.08H2217.22V1320.5zM2216.22 1320.5V1303.65H2218.34V1320.5zM2217.34 1320.5V1312.08H2219.46V1320.5zM2218.46 1320.5V1303.65H2220.58V1320.5zM2219.58 1320.5V1312.08H2221.71V1320.5zM2220.71 1320.5V1303.65H2225.07V1320.5zM2224.07 1320.5V1312.08H2227.32V1320.5zM2226.32 1320.5V1295.22H2228.44V1320.5zM2227.44 1320.5V1303.65H2229.56V1320.5zM2228.56 1320.5V1312.08H2230.68V1320.5zM2229.68 1320.5V1303.65H2231.81V1320.5zM2230.81 1320.5V1312.08H2232.93V1320.5zM2231.93 1320.5V1303.65H2237.42V1320.5zM2236.42 1320.5V1312.08H2238.54V1320.5zM2237.54 1320.5V1303.65H2240.78V1320.5zM2239.78 1320.5V1312.08H2241.9V1320.5zM2240.9 1320.5V1303.65H2244.15V1320.5zM2243.15 1320.5V1312.08H2245.27V1320.5zM2244.27 1320.5V1303.65H2246.39V1320.5zM2245.39 1320.5V1295.22H2247.51V1320.5zM2246.51 1320.5V1303.65H2248.64V1320.5zM2247.64 1320.5V1312.08H2249.76V1320.5zM2248.76 1320.5V1295.22H2250.88V1320.5zM2249.88 1320.5V1303.65H2252V1320.5zM2251 1320.5V1295.22H2253.12V1320.5zM2252.12 1320.5V1303.65H2254.25V1320.5zM2253.25 1320.5V1295.22H2255.37V1320.5zM2254.37 1320.5V1303.65H2256.49V1320.5zM2255.49 1320.5V1312.08H2257.61V1320.5zM2256.61 1320.5V1303.65H2259.86V1320.5zM2258.86 1320.5V1295.22H2260.98V1320.5zM2259.98 1320.5V1303.65H2262.1V1320.5zM2261.1 1320.5V1295.22H2264.34V1320.5zM2263.34 1320.5V1303.65H2265.47V1320.5zM2264.47 1320.5V1312.08H2266.59V1320.5zM2265.59 1320.5V1295.22H2273.32V1320.5zM2272.32 1320.5V1303.65H2275.56V1320.5zM2274.56 1320.5V1295.22H2277.81V1320.5zM2276.81 1320.5V1286.8H2278.93V1320.5zM2277.93 1320.5V1295.22H2282.3V1320.5zM2281.3 1320.5V1303.65H2284.54V1320.5zM2283.54 1320.5V1295.22H2289.03V1320.5zM2288.03 1320.5V1303.65H2290.15V1320.5zM2289.15 1320.5V1295.22H2292.39V1320.5zM2291.39 1320.5V1303.65H2294.64V1320.5zM2293.64 1320.5V1295.22H2296.88V1320.5zM2295.88 1320.5V1286.8H2298V1320.5zM2297 1320.5V1303.65H2299.13V1320.5zM2298.13 1320.5V1295.22H2302.49V1320.5zM2301.49 1320.5V1303.65H2303.61V1320.5zM2302.61 1320.5V1295.22H2304.74V1320.5zM2303.74 1320.5V1286.8H2305.86V1320.5zM2304.86 1320.5V1295.22H2309.22V1320.5zM2308.22 1320.5V1303.65H2311.47V1320.5zM2310.47 1320.5V1295.22H2317.08V1320.5zM2316.08 1320.5V1303.65H2318.2V1320.5zM2317.2 1320.5V1295.22H2319.32V1320.5zM2318.32 1320.5V1303.65H2320.44V1320.5zM2319.44 1320.5V1295.22H2328.3V1320.5zM2327.3 1320.5V1303.65H2329.42V1320.5zM2328.42 1320.5V1295.22H2331.67V1320.5zM2330.67 1320.5V1286.8H2332.79V1320.5zM2331.79 1320.5V1295.22H2335.03V1320.5zM2334.03 1320.5V1303.65H2337.28V1320.5zM2336.28 1320.5V1295.22H2342.89V1320.5zM2341.89 1320.5V1303.65H2344.01V1320.5zM2343.01 1320.5V1295.22H2345.13V1320.5zM2344.13 1320.5V1303.65H2346.25V1320.5zM2345.25 1320.5V1295.22H2350.74V1320.5zM2349.74 1320.5V1286.8H2351.86V1320.5zM2350.86 1320.5V1295.22H2352.98V1320.5zM2351.98 1320.5V1303.65H2355.23V1320.5zM2354.23 1320.5V1295.22H2357.47V1320.5zM2356.47 1320.5V1286.8H2358.59V1320.5zM2357.59 1320.5V1295.22H2360.84V1320.5zM2359.84 1320.5V1303.65H2361.96V1320.5zM2360.96 1320.5V1278.38H2363.08V1320.5zM2362.08 1320.5V1269.95H2365.33V1320.5zM2364.33 1320.5V1278.38H2366.45V1320.5zM2365.45 1320.5V1261.53H2367.57V1320.5zM2366.57 1320.5V1269.95H2368.69V1320.5zM2367.69 1320.5V1278.38H2369.81V1320.5zM2368.81 1320.5V1269.95H2370.94V1320.5zM2369.94 1320.5V1278.38H2372.06V1320.5zM2371.06 1320.5V1269.95H2373.18V1320.5zM2372.18 1320.5V1286.8H2377.67V1320.5zM2376.67 1320.5V1303.65H2378.79V1320.5zM2377.79 1320.5V1295.22H2379.91V1320.5zM2378.91 1320.5V1286.8H2381.03V1320.5zM2380.03 1320.5V1295.22H2384.4V1320.5zM2383.4 1320.5V1286.8H2386.64V1320.5zM2385.64 1320.5V1303.65H2387.77V1320.5zM2386.77 1320.5V1295.22H2391.13V1320.5zM2390.13 1320.5V1286.8H2392.25V1320.5zM2391.25 1320.5V1295.22H2396.74V1320.5zM2395.74 1320.5V1303.65H2397.86V1320.5zM2396.86 1320.5V1295.22H2400.11V1320.5zM2399.11 1320.5V1286.8H2401.23V1320.5zM2400.23 1320.5V1295.22H2406.84V1320.5zM2405.84 1320.5V1286.8H2407.96V1320.5zM2406.96 1320.5V1295.22H2411.33V1320.5zM2410.33 1320.5V1286.8H2412.45V1320.5zM2411.45 1320.5V1295.22H2413.57V1320.5zM2412.57 1320.5V1303.65H2414.69V1320.5zM2413.69 1320.5V1295.22H2415.82V1320.5z" fill="#a0ecc3"/>
<path d="M236.11 1320.5V1303.65H239.95V1320.5zM239.47 1320.5V1295.22H245.56V1320.5zM245.08 1320.5V1303.65H247.81V1320.5zM247.33 1320.5V1295.22H253.42V1320.5zM252.94 1320.5V1303.65H256.78V1320.5zM256.3 1320.5V1312.08H259.03V1320.5zM258.55 1320.5V1303.65H262.39V1320.5zM261.91 1320.5V1312.08H264.64V1320.5zM264.16 1320.5V1303.65H265.76V1320.5zM265.28 1320.5V1312.08H269.13V1320.5zM268.65 1320.5V1303.65H271.37V1320.5zM270.89 1320.5V1312.08H276.98V1320.5zM276.5 1320.5V1303.65H278.1V1320.5zM277.62 1320.5V1312.08H282.59V1320.5zM282.11 1320.5V1303.65H283.71V1320.5zM283.23 1320.5V1312.08H291.57V1320.5zM291.09 1320.5V1303.65H292.69V1320.5zM292.21 1320.5V1312.08H300.54V1320.5zM300.06 1320.5V1303.65H301.66V1320.5zM301.18 1320.5V1312.08H344.3V1320.5zM343.82 1320.5V1303.65H345.42V1320.5zM344.94 1320.5V1312.08H371.23V1320.5zM370.75 1320.5V1303.65H372.35V1320.5zM371.87 1320.5V1312.08H383.57V1320.5zM559.25 1320.5V1312.08H560.85V1320.5zM560.37 1320.5V1303.65H563.1V1320.5zM562.62 1320.5V1295.22H564.22V1320.5zM563.74 1320.5V1303.65H567.58V1320.5zM567.1 1320.5V1295.22H568.71V1320.5zM568.23 1320.5V1303.65H570.95V1320.5zM570.47 1320.5V1286.8H572.07V1320.5zM571.59 1320.5V1025.62H573.19V1320.5zM572.71 1320.5V983.5H575.44V1320.5zM574.96 1320.5V1084.6H576.56V1320.5zM576.08 1320.5V1278.38H577.68V1320.5zM577.2 1320.5V1253.1H578.8V1320.5zM578.32 1320.5V1008.77H579.93V1320.5zM579.45 1320.5V983.5H582.17V1320.5zM581.69 1320.5V1118.3H583.29V1320.5zM582.81 1320.5V1244.67H584.41V1320.5zM583.93 1320.5V1278.38H585.54V1320.5zM585.06 1320.5V1286.8H586.66V1320.5zM586.18 1320.5V1303.65H587.78V1320.5zM587.3 1320.5V1286.8H588.9V1320.5zM588.42 1320.5V1278.38H590.02V1320.5zM589.54 1320.5V1286.8H593.39V1320.5zM592.91 1320.5V1303.65H594.51V1320.5zM594.03 1320.5V1278.38H596.76V1320.5zM596.28 1320.5V1286.8H599V1320.5zM598.52 1320.5V1303.65H600.12V1320.5zM599.64 1320.5V1286.8H602.37V1320.5zM601.89 1320.5V1303.65H603.49V1320.5zM603.01 1320.5V1286.8H605.73V1320.5zM605.25 1320.5V1295.22H611.34V1320.5zM610.86 1320.5V1303.65H612.46V1320.5zM611.98 1320.5V1295.22H618.07V1320.5zM617.59 1320.5V1303.65H619.2V1320.5zM618.72 1320.5V1286.8H621.44V1320.5zM620.96 1320.5V1295.22H624.81V1320.5zM624.33 1320.5V1286.8H625.93V1320.5zM625.45 1320.5V1303.65H628.17V1320.5zM627.69 1320.5V1295.22H629.3V1320.5zM628.82 1320.5V1236.25H630.42V1320.5zM629.94 1320.5V1168.85H632.66V1320.5zM632.18 1320.5V1210.97H633.78V1320.5zM633.3 1320.5V1219.4H634.91V1320.5zM634.43 1320.5V1244.67H636.03V1320.5zM635.55 1320.5V1253.1H637.15V1320.5zM636.67 1320.5V1261.53H639.39V1320.5zM638.91 1320.5V1295.22H643.88V1320.5zM643.4 1320.5V1303.65H645V1320.5zM644.52 1320.5V1295.22H651.74V1320.5zM651.26 1320.5V1303.65H652.86V1320.5zM652.38 1320.5V1295.22H656.22V1320.5zM655.74 1320.5V1286.8H657.35V1320.5zM656.87 1320.5V1236.25H658.47V1320.5zM657.99 1320.5V1143.58H659.59V1320.5zM659.11 1320.5V1278.38H660.71V1320.5zM660.23 1320.5V1295.22H662.96V1320.5zM662.48 1320.5V1303.65H664.08V1320.5zM663.6 1320.5V1295.22H666.32V1320.5zM665.84 1320.5V1303.65H667.44V1320.5zM666.96 1320.5V1295.22H669.69V1320.5zM669.21 1320.5V1303.65H670.81V1320.5zM670.33 1320.5V1295.22H673.05V1320.5zM672.57 1320.5V1286.8H674.18V1320.5zM673.7 1320.5V1303.65H675.3V1320.5zM674.82 1320.5V1244.67H677.54V1320.5zM677.06 1320.5V1269.95H678.66V1320.5zM678.18 1320.5V1295.22H680.91V1320.5zM680.43 1320.5V1303.65H682.03V1320.5zM681.55 1320.5V1295.22H683.15V1320.5zM682.67 1320.5V1303.65H684.27V1320.5zM683.79 1320.5V1286.8H686.52V1320.5zM686.04 1320.5V1253.1H687.64V1320.5zM687.16 1320.5V1244.67H688.76V1320.5zM688.28 1320.5V1286.8H689.88V1320.5zM689.4 1320.5V1303.65H691.01V1320.5zM690.53 1320.5V1312.08H702.23V1320.5zM701.75 1320.5V1303.65H703.35V1320.5zM702.87 1320.5V1312.08H706.71V1320.5zM882.39 1320.5V1303.65H887.36V1320.5zM886.88 1320.5V1295.22H888.48V1320.5zM888 1320.5V1303.65H891.85V1320.5zM891.37 1320.5V1261.53H892.97V1320.5zM892.49 1320.5V1177.28H894.09V1320.5zM893.61 1320.5V1202.55H895.21V1320.5zM894.73 1320.5V1101.45H896.34V1320.5zM895.86 1320.5V1160.42H897.46V1320.5zM896.98 1320.5V1126.72H898.58V1320.5zM898.1 1320.5V1160.42H899.7V1320.5zM899.22 1320.5V1210.97H903.07V1320.5zM902.59 1320.5V1278.38H905.31V1320.5zM904.83 1320.5V1194.12H906.43V1320.5zM905.95 1320.5V1185.7H907.56V1320.5zM907.08 1320.5V1194.12H908.68V1320.5zM908.2 1320.5V1185.7H910.92V1320.5zM910.44 1320.5V1168.85H913.17V1320.5zM912.69 1320.5V1227.83H914.29V1320.5zM913.81 1320.5V1286.8H916.53V1320.5zM916.05 1320.5V1227.83H917.66V1320.5zM917.18 1320.5V1286.8H919.9V1320.5zM919.42 1320.5V1278.38H921.02V1320.5zM920.54 1320.5V1269.95H923.27V1320.5zM922.79 1320.5V1244.67H925.51V1320.5zM925.03 1320.5V1261.53H926.63V1320.5zM926.15 1320.5V1278.38H928.88V1320.5zM928.4 1320.5V1269.95H930V1320.5zM929.52 1320.5V1236.25H932.24V1320.5zM931.76 1320.5V1253.1H933.36V1320.5zM932.88 1320.5V1278.38H934.49V1320.5zM934.01 1320.5V1295.22H936.73V1320.5zM936.25 1320.5V1278.38H940.1V1320.5zM939.62 1320.5V1261.53H942.34V1320.5zM941.86 1320.5V1269.95H943.46V1320.5zM942.98 1320.5V1253.1H945.71V1320.5zM945.23 1320.5V1286.8H947.95V1320.5zM947.47 1320.5V1295.22H949.07V1320.5zM948.59 1320.5V1303.65H950.19V1320.5zM949.71 1320.5V1295.22H951.32V1320.5zM950.84 1320.5V1286.8H953.56V1320.5zM953.08 1320.5V1278.38H955.8V1320.5zM955.32 1320.5V1286.8H956.93V1320.5zM956.45 1320.5V1303.65H959.17V1320.5zM958.69 1320.5V1295.22H960.29V1320.5zM959.81 1320.5V1286.8H962.54V1320.5zM962.06 1320.5V1278.38H963.66V1320.5zM963.18 1320.5V1253.1H965.9V1320.5zM965.42 1320.5V1269.95H968.15V1320.5zM967.67 1320.5V1286.8H970.39V1320.5zM969.91 1320.5V1303.65H972.63V1320.5zM972.15 1320.5V1295.22H978.24V1320.5zM977.76 1320.5V1303.65H979.37V1320.5zM978.89 1320.5V1202.55H981.61V1320.5zM981.13 1320.5V1219.4H982.73V1320.5zM982.25 1320.5V1210.97H984.98V1320.5zM984.5 1320.5V1152H986.1V1320.5zM985.62 1320.5V1227.83H988.34V1320.5zM987.86 1320.5V1244.67H989.46V1320.5zM988.98 1320.5V1278.38H990.59V1320.5zM990.11 1320.5V1160.42H991.71V1320.5zM991.23 1320.5V1168.85H992.83V1320.5zM992.35 1320.5V1269.95H995.07V1320.5zM994.59 1320.5V1210.97H997.32V1320.5zM996.84 1320.5V1278.38H999.56V1320.5zM999.08 1320.5V1286.8H1000.68V1320.5zM1000.2 1320.5V1295.22H1004.05V1320.5zM1003.57 1320.5V1303.65H1005.17V1320.5zM1004.69 1320.5V1295.22H1007.42V1320.5zM1006.94 1320.5V1303.65H1008.54V1320.5zM1008.06 1320.5V1295.22H1009.66V1320.5zM1009.18 1320.5V1269.95H1010.78V1320.5zM1010.3 1320.5V1261.53H1013.03V1320.5zM1012.55 1320.5V1278.38H1014.15V1320.5zM1013.67 1320.5V1253.1H1017.52V1320.5zM1017.04 1320.5V1278.38H1018.64V1320.5zM1018.16 1320.5V1303.65H1019.76V1320.5zM1019.28 1320.5V1312.08H1026.49V1320.5zM1026.01 1320.5V1303.65H1029.86V1320.5zM1205.54 1320.5V1303.65H1208.26V1320.5zM1207.78 1320.5V1278.38H1209.38V1320.5zM1208.9 1320.5V1202.55H1211.63V1320.5zM1211.15 1320.5V1210.97H1212.75V1320.5zM1212.27 1320.5V1194.12H1213.87V1320.5zM1213.39 1320.5V1177.28H1216.11V1320.5zM1215.63 1320.5V1135.15H1217.24V1320.5zM1216.76 1320.5V1084.6H1219.48V1320.5zM1219 1320.5V1177.28H1220.6V1320.5zM1220.12 1320.5V1269.95H1221.72V1320.5zM1221.24 1320.5V1210.97H1222.85V1320.5zM1222.37 1320.5V1000.35H1225.09V1320.5zM1224.61 1320.5V1143.58H1226.21V1320.5zM1225.73 1320.5V1236.25H1227.33V1320.5zM1226.85 1320.5V1286.8H1228.46V1320.5zM1227.98 1320.5V1303.65H1229.58V1320.5zM1229.1 1320.5V1168.85H1231.82V1320.5zM1231.34 1320.5V1295.22H1236.31V1320.5zM1235.83 1320.5V1202.55H1239.68V1320.5zM1239.2 1320.5V1278.38H1240.8V1320.5zM1240.32 1320.5V1295.22H1241.92V1320.5zM1241.44 1320.5V1269.95H1243.04V1320.5zM1242.56 1320.5V1101.45H1245.29V1320.5zM1244.81 1320.5V1143.58H1246.41V1320.5zM1245.93 1320.5V1126.72H1247.53V1320.5zM1247.05 1320.5V1034.05H1249.77V1320.5zM1249.29 1320.5V916.1H1252.02V1320.5zM1251.54 1320.5V1034.05H1253.14V1320.5zM1252.66 1320.5V1261.53H1254.26V1320.5zM1253.78 1320.5V1202.55H1256.51V1320.5zM1256.03 1320.5V1286.8H1258.75V1320.5zM1258.27 1320.5V1295.22H1259.87V1320.5zM1259.39 1320.5V1286.8H1260.99V1320.5zM1260.51 1320.5V1042.47H1263.24V1320.5zM1262.76 1320.5V916.1H1264.36V1320.5zM1263.88 1320.5V1076.17H1265.48V1320.5zM1265 1320.5V1034.05H1267.73V1320.5zM1267.25 1320.5V1076.17H1268.85V1320.5zM1268.37 1320.5V1303.65H1269.97V1320.5zM1269.49 1320.5V1295.22H1272.21V1320.5zM1271.73 1320.5V1286.8H1273.34V1320.5zM1272.86 1320.5V1278.38H1275.58V1320.5zM1275.1 1320.5V1286.8H1276.7V1320.5zM1276.22 1320.5V1295.22H1277.82V1320.5zM1277.34 1320.5V1253.1H1278.95V1320.5zM1278.47 1320.5V1143.58H1281.19V1320.5zM1280.71 1320.5V1202.55H1282.31V1320.5zM1281.83 1320.5V1219.4H1283.43V1320.5zM1282.95 1320.5V1261.53H1284.56V1320.5zM1284.08 1320.5V1236.25H1286.8V1320.5zM1286.32 1320.5V1244.67H1287.92V1320.5zM1287.44 1320.5V1269.95H1289.05V1320.5zM1288.57 1320.5V1261.53H1290.17V1320.5zM1289.69 1320.5V1278.38H1291.29V1320.5zM1290.81 1320.5V1210.97H1293.53V1320.5zM1293.05 1320.5V1177.28H1294.66V1320.5zM1294.18 1320.5V949.8H1295.78V1320.5zM1295.3 1320.5V907.67H1296.9V1320.5zM1296.42 1320.5V899.25H1299.14V1320.5zM1298.66 1320.5V932.95H1301.39V1320.5zM1300.91 1320.5V907.67H1302.51V1320.5zM1302.03 1320.5V840.27H1304.75V1320.5zM1304.27 1320.5V1202.55H1305.88V1320.5zM1305.4 1320.5V1269.95H1307V1320.5zM1306.52 1320.5V1185.7H1308.12V1320.5zM1307.64 1320.5V1017.2H1310.36V1320.5zM1309.88 1320.5V932.95H1312.61V1320.5zM1312.13 1320.5V1067.75H1313.73V1320.5zM1313.25 1320.5V1177.28H1314.85V1320.5zM1314.37 1320.5V1194.12H1317.1V1320.5zM1316.62 1320.5V1210.97H1319.34V1320.5zM1318.86 1320.5V1278.38H1320.46V1320.5zM1319.98 1320.5V1244.67H1321.58V1320.5zM1321.1 1320.5V1025.62H1324.95V1320.5zM1324.47 1320.5V1210.97H1326.07V1320.5zM1325.59 1320.5V1295.22H1328.32V1320.5zM1327.84 1320.5V1278.38H1331.68V1320.5zM1331.2 1320.5V1210.97H1332.8V1320.5zM1332.32 1320.5V1160.42H1335.05V1320.5zM1334.57 1320.5V1202.55H1336.17V1320.5zM1335.69 1320.5V1177.28H1338.41V1320.5zM1337.93 1320.5V1219.4H1339.54V1320.5zM1339.06 1320.5V1286.8H1340.66V1320.5zM1340.18 1320.5V1295.22H1342.9V1320.5zM1342.42 1320.5V1286.8H1344.02V1320.5zM1343.54 1320.5V1312.08H1347.39V1320.5zM1346.91 1320.5V1303.65H1348.51V1320.5zM1348.03 1320.5V1312.08H1351.88V1320.5zM1351.4 1320.5V1303.65H1353V1320.5zM1528.68 1320.5V1295.22H1530.28V1320.5zM1529.8 1320.5V1303.65H1535.89V1320.5zM1535.41 1320.5V1253.1H1537.01V1320.5zM1536.53 1320.5V1194.12H1539.26V1320.5zM1538.78 1320.5V1210.97H1540.38V1320.5zM1539.9 1320.5V1084.6H1541.5V1320.5zM1541.02 1320.5V1059.33H1542.62V1320.5zM1542.14 1320.5V1017.2H1544.87V1320.5zM1544.39 1320.5V916.1H1548.23V1320.5zM1547.75 1320.5V1109.88H1549.35V1320.5zM1548.87 1320.5V1227.83H1550.48V1320.5zM1550 1320.5V1219.4H1552.72V1320.5zM1552.24 1320.5V1185.7H1553.84V1320.5zM1553.36 1320.5V1008.77H1556.09V1320.5zM1555.61 1320.5V1152H1559.45V1320.5zM1558.97 1320.5V1244.67H1560.57V1320.5zM1560.09 1320.5V1286.8H1562.82V1320.5zM1562.34 1320.5V1295.22H1563.94V1320.5zM1563.46 1320.5V1278.38H1565.06V1320.5zM1564.58 1320.5V1067.75H1566.18V1320.5zM1565.7 1320.5V958.22H1568.43V1320.5zM1567.95 1320.5V949.8H1569.55V1320.5zM1569.07 1320.5V958.22H1571.8V1320.5zM1571.32 1320.5V899.25H1574.04V1320.5zM1573.56 1320.5V1244.67H1575.16V1320.5zM1574.68 1320.5V1303.65H1576.28V1320.5zM1575.8 1320.5V1295.22H1578.53V1320.5zM1578.05 1320.5V1303.65H1579.65V1320.5zM1579.17 1320.5V1295.22H1583.02V1320.5zM1582.54 1320.5V1303.65H1584.14V1320.5zM1583.66 1320.5V1295.22H1585.26V1320.5zM1584.78 1320.5V1303.65H1586.38V1320.5zM1585.9 1320.5V1295.22H1589.75V1320.5zM1589.27 1320.5V1303.65H1590.87V1320.5zM1590.39 1320.5V1295.22H1591.99V1320.5zM1591.51 1320.5V1118.3H1593.11V1320.5zM1592.63 1320.5V1059.33H1595.36V1320.5zM1594.88 1320.5V1143.58H1597.6V1320.5zM1597.12 1320.5V1152H1599.85V1320.5zM1599.37 1320.5V1194.12H1604.33V1320.5zM1603.85 1320.5V1152H1606.58V1320.5zM1606.1 1320.5V1177.28H1607.7V1320.5zM1607.22 1320.5V1219.4H1608.82V1320.5zM1608.34 1320.5V1269.95H1609.94V1320.5zM1609.46 1320.5V1286.8H1613.31V1320.5zM1612.83 1320.5V1295.22H1614.43V1320.5zM1613.95 1320.5V1303.65H1615.55V1320.5zM1615.07 1320.5V1295.22H1616.68V1320.5zM1616.2 1320.5V1286.8H1618.92V1320.5zM1618.44 1320.5V1025.62H1620.04V1320.5zM1619.56 1320.5V991.92H1622.29V1320.5zM1621.81 1320.5V1000.35H1623.41V1320.5zM1622.93 1320.5V1109.88H1624.53V1320.5zM1624.05 1320.5V1295.22H1625.65V1320.5zM1625.17 1320.5V1303.65H1626.77V1320.5zM1626.29 1320.5V1295.22H1629.02V1320.5zM1628.54 1320.5V1286.8H1631.26V1320.5zM1630.78 1320.5V1295.22H1632.38V1320.5zM1631.9 1320.5V1303.65H1633.51V1320.5zM1633.03 1320.5V1295.22H1634.63V1320.5zM1634.15 1320.5V1303.65H1635.75V1320.5zM1635.27 1320.5V1295.22H1636.87V1320.5zM1636.39 1320.5V1143.58H1637.99V1320.5zM1637.51 1320.5V1101.45H1640.24V1320.5zM1639.76 1320.5V1295.22H1641.36V1320.5zM1640.88 1320.5V1278.38H1642.48V1320.5zM1642 1320.5V1185.7H1644.73V1320.5zM1644.25 1320.5V1210.97H1645.85V1320.5zM1645.37 1320.5V1202.55H1650.34V1320.5zM1649.86 1320.5V1227.83H1651.46V1320.5zM1650.98 1320.5V1303.65H1652.58V1320.5zM1652.1 1320.5V1286.8H1654.82V1320.5zM1654.34 1320.5V1303.65H1660.43V1320.5zM1659.95 1320.5V1312.08H1676.14V1320.5z" fill="#24926f"/>
<path d="M143.2 1320.5H154M143.2 1236.25H154M143.2 1152H154M143.2 1067.75H154M143.2 983.5H154M143.2 899.25H154M143.2 815H154" stroke="#7c7c7c" stroke-width=".95" fill="none"/>
<path d="M156 1322V1332.3M479.06 1322V1332.3M802.11 1322V1332.3M1125.17 1322V1332.3M1448.23 1322V1332.3M1771.29 1322V1332.3M2094.34 1322V1332.3" stroke="#a6a6a6" stroke-width="1.5" fill="none"/>
<path d="M155 815V1321.7" stroke="#6f6f6f" stroke-width="2" fill="none"/>
<path d="M156 1321.5H2417" stroke="#5e5e5e" stroke-width="1.3" fill="none"/>
<g class="gs" font-family="'DejaVu Sans','Liberation Sans',sans-serif" font-size="20.2" fill="#444444" stroke="#444444" stroke-width=".25" text-anchor="end">
<text x="133.3" y="1327.6">0</text>
<text x="133.3" y="1243.35">10</text>
<text x="133.3" y="1159.1">20</text>
<text x="133.3" y="1074.85">30</text>
<text x="133.3" y="990.6">40</text>
<text x="133.3" y="906.35">50</text>
<text x="133.3" y="822.1">60</text>
</g>
<g class="gs" font-family="'DejaVu Sans','Liberation Sans',sans-serif" font-size="19.8" fill="#000" stroke="#000" stroke-width=".3" text-anchor="middle" word-spacing="1.2" letter-spacing=".12">
<text x="156.6" y="1357">lun. 06</text>
<text x="479.66" y="1357">mar. 07</text>
<text x="802.71" y="1357">mer. 08</text>
<text x="1125.77" y="1357">jeu. 09</text>
<text x="1448.83" y="1357">ven. 10</text>
<text x="1771.89" y="1357">sam. 11</text>
<text x="2094.94" y="1357">dim. 12</text>
</g>
<text class="gs" transform="translate(86.3 1068) rotate(-90)" font-family="'DejaVu Sans Condensed','DejaVu Sans',sans-serif" font-stretch="condensed" font-size="22.5" fill="#444444" text-anchor="middle">kW</text>
</svg>
<svg style="position:absolute;left:0;top:0" width="2511" height="1415" viewBox="0 0 2511 1415">
<defs><linearGradient id="eg" x1="0" y1="0" x2="0" y2="1"><stop offset="0" stop-color="#00f2cb"/><stop offset=".62" stop-color="#00f0c8"/><stop offset=".72" stop-color="#00c4a4"/><stop offset="1" stop-color="#00caa8"/></linearGradient><linearGradient id="tg" x1="0" y1="0" x2="0" y2="1"><stop offset="0" stop-color="#00c9ab"/><stop offset=".6" stop-color="#00bfa1"/><stop offset="1" stop-color="#00ad92"/></linearGradient><clipPath id="tc"><rect x="0" y="0" width="106" height="55.6"/></clipPath></defs>
<rect x="176.4" y="49" width="481.6" height="77.7" fill="#0a0817"/>
<text x="187" y="109.3" font-family="'Liberation Sans','DejaVu Sans',sans-serif" font-size="58" textLength="86" lengthAdjust="spacingAndGlyphs" fill="url(#eg)" stroke="url(#eg)" stroke-width="2.6" stroke-linejoin="round">éco</text>
<text x="272" y="109.3" font-family="'Liberation Sans','DejaVu Sans',sans-serif" font-size="60" textLength="102" lengthAdjust="spacingAndGlyphs" fill="#fff" stroke="#fff" stroke-width="2.6" stroke-linejoin="round">watt</text>
<path d="M300 105.5 L313.6 68.8" stroke="#fff" stroke-width="7.4" stroke-linecap="round" fill="none"/>
<ellipse cx="433.7" cy="89.2" rx="26" ry="28" fill="#00b3e2"/>
<text x="433.7" y="97.5" text-anchor="middle" font-family="'Liberation Sans','DejaVu Sans',sans-serif" font-size="26" fill="#fff" stroke="#fff" stroke-width=".5" textLength="33" lengthAdjust="spacingAndGlyphs">Rte</text>
<path d="M418.5 93.6H449.5" stroke="#fff" stroke-width="1.1" fill="none"/>
<g font-family="'Liberation Sans','DejaVu Sans',sans-serif" font-size="12.6" fill="#0b9bcb" stroke="#0b9bcb" stroke-width=".35"><text x="468.3" y="79" textLength="48.5" lengthAdjust="spacingAndGlyphs">Le réseau</text><text x="468.3" y="92.4" textLength="61.5" lengthAdjust="spacingAndGlyphs">de transport</text><text x="468.3" y="105.3" textLength="57.5" lengthAdjust="spacingAndGlyphs">d’électricité</text></g>
<rect x="546.4" y="61.2" width="100.6" height="56" fill="#fff"/>
<rect x="552.9" y="68.7" width="7.6" height="7" fill="#27348b"/><rect x="563.6" y="68.7" width="8.2" height="7" fill="#e1000f"/>
<g font-family="'Liberation Sans','DejaVu Sans',sans-serif" font-weight="bold" font-size="7.6" fill="#1a1a1a"><text x="552.7" y="84.9" textLength="44" lengthAdjust="spacingAndGlyphs">RÉPUBLIQUE</text><text x="552.7" y="92.9" textLength="41" lengthAdjust="spacingAndGlyphs">FRANÇAISE</text></g>
<g font-family="'Liberation Sans','DejaVu Sans',sans-serif" font-style="italic" font-size="3.6" fill="#555"><text x="553.3" y="99.8">Liberté</text><text x="553.3" y="104.6">Égalité</text><text x="553.3" y="109.6">Fraternité</text></g>
<rect x="607.2" y="66.9" width="34.6" height="44.4" fill="#fff" stroke="#5b8bc9" stroke-width="1"/>
<text x="624.5" y="74.8" text-anchor="middle" font-family="'Liberation Sans','DejaVu Sans',sans-serif" font-weight="bold" font-size="6.6" fill="#e1000f" textLength="25.5" lengthAdjust="spacingAndGlyphs">ADEME</text>
<circle cx="624.3" cy="87.2" r="8.7" fill="#2a4fa8"/>
<path d="M619.5 83.5q3-3.5 6.5-2.5q-1.5 2.5-.5 4.5t-1.5 4.5q-2 1-3.5 4q-2-5-1-10.5z" fill="#8fa6dc" opacity=".75"/>
<g font-family="'Liberation Sans','DejaVu Sans',sans-serif" font-weight="bold" font-size="2.7" fill="#e1000f" text-anchor="middle"><text x="624.5" y="101.2" textLength="25" lengthAdjust="spacingAndGlyphs">AGENCE DE LA</text><text x="624.5" y="105" textLength="25" lengthAdjust="spacingAndGlyphs">TRANSITION</text><text x="624.5" y="108.8" textLength="25" lengthAdjust="spacingAndGlyphs">ÉCOLOGIQUE</text></g>
<path fill="#dcdcdc" fill-rule="evenodd" d="M169.3 135.4H660.6V258.6H169.3zM172.9 139H288.9V189.2H172.9zM294.6 139H411.6V189.2H294.6zM417 139H533.2V189.2H417zM538.9 139H655.4V189.2H538.9zM172.9 195.4H288.9V253.4H172.9zM294.6 195.4H411.6V253.4H294.6zM417 195.4H533.2V253.4H417zM538.9 195.4H655.4V253.4H538.9z"/>
<rect x="172.9" y="139" width="116.0" height="50.2" fill="#f2f2f2" opacity=".0"/>
<rect x="294.6" y="139" width="117.0" height="50.2" fill="#f2f2f2" opacity=".0"/>
<rect x="417.0" y="139" width="116.2" height="50.2" fill="#f2f2f2" opacity=".0"/>
<rect x="538.9" y="139" width="116.5" height="50.2" fill="#f2f2f2" opacity=".0"/>
<g transform="translate(180.2 195.0)" clip-path="url(#tc)"><rect width="106" height="55.6" fill="url(#tg)"/><path d="M15 0C40 8 52 24.5 76 24.5C88 24.5 98 20 106 15.5V-1z" fill="#00efcd"/><path d="M29.5 0C50 5.5 58 11.8 76 11.8C88 11.8 98 7.5 106 3.2V-1z" fill="#00a38a"/></g>
<g transform="translate(302.1 196.1)" clip-path="url(#tc)"><rect width="106" height="55.6" fill="url(#tg)"/><path d="M15 0C40 8 52 24.5 76 24.5C88 24.5 98 20 106 15.5V-1z" fill="#00efcd"/><path d="M29.5 0C50 5.5 58 11.8 76 11.8C88 11.8 98 7.5 106 3.2V-1z" fill="#00a38a"/></g>
<g transform="translate(424.0 196.1)" clip-path="url(#tc)"><rect width="106" height="55.6" fill="url(#tg)"/><path d="M15 0C40 8 52 24.5 76 24.5C88 24.5 98 20 106 15.5V-1z" fill="#00efcd"/><path d="M29.5 0C50 5.5 58 11.8 76 11.8C88 11.8 98 7.5 106 3.2V-1z" fill="#00a38a"/></g>
<g transform="translate(544.1 196.1)" clip-path="url(#tc)"><rect width="106" height="55.6" fill="url(#tg)"/><path d="M15 0C40 8 52 24.5 76 24.5C88 24.5 98 20 106 15.5V-1z" fill="#00efcd"/><path d="M29.5 0C50 5.5 58 11.8 76 11.8C88 11.8 98 7.5 106 3.2V-1z" fill="#00a38a"/></g>
<defs><clipPath id="cj" clipPathUnits="userSpaceOnUse"><path d="M-20 -17.5H9.6V-30H30V10H-20z"/></clipPath><clipPath id="c1" clipPathUnits="userSpaceOnUse"><path d="M-2 -30H14V5H6.3V-3.2H-2z"/></clipPath></defs>
<g class="gs" transform="translate(222.3 174.7) scale(1.2 1)"><text x="0" y="0" font-family="'Liberation Sans','DejaVu Sans',sans-serif" font-size="32.5" fill="#000" stroke="#000" stroke-width=".7" clip-path="url(#cj)">J</text></g>
<g class="gs" transform="translate(312.4 174.7) scale(1.2 1)"><text x="0" y="0" font-family="'Liberation Sans','DejaVu Sans',sans-serif" font-size="32.5" fill="#000" stroke="#000" stroke-width=".7" clip-path="url(#cj)">J</text></g>
<g class="gs" transform="translate(353.59999999999997 164.2) scale(.96 1.2)"><text x="0" y="9.6" text-anchor="middle" font-family="'Liberation Sans','DejaVu Sans',sans-serif" font-size="31" fill="#000">+</text></g>
<g class="gs" transform="translate(377.79999999999995 174.7)"><text x="0" y="0" font-family="'Liberation Sans','DejaVu Sans',sans-serif" font-size="32.5" fill="#000" clip-path="url(#c1)">1</text></g>
<g class="gs" transform="translate(434.3 174.7) scale(1.2 1)"><text x="0" y="0" font-family="'Liberation Sans','DejaVu Sans',sans-serif" font-size="32.5" fill="#000" stroke="#000" stroke-width=".7" clip-path="url(#cj)">J</text></g>
<g class="gs" transform="translate(475.5 164.2) scale(.96 1.2)"><text x="0" y="9.6" text-anchor="middle" font-family="'Liberation Sans','DejaVu Sans',sans-serif" font-size="31" fill="#000">+</text></g>
<g class="gs" transform="translate(498.9 174.7)"><text x="0" y="0" font-family="'Liberation Sans','DejaVu Sans',sans-serif" font-size="32.5" font-weight="bold" fill="#000">2</text></g>
<g class="gs" transform="translate(555.8 174.7) scale(1.2 1)"><text x="0" y="0" font-family="'Liberation Sans','DejaVu Sans',sans-serif" font-size="32.5" fill="#000" stroke="#000" stroke-width=".7" clip-path="url(#cj)">J</text></g>
<g class="gs" transform="translate(597.0 164.2) scale(.96 1.2)"><text x="0" y="9.6" text-anchor="middle" font-family="'Liberation Sans','DejaVu Sans',sans-serif" font-size="31" fill="#000">+</text></g>
<g class="gs" transform="translate(620.4 174.7)"><text x="0" y="0" font-family="'Liberation Sans','DejaVu Sans',sans-serif" font-size="32.5" font-weight="bold" fill="#000">3</text></g>
</svg>
<div style="position:absolute;left:2322px;top:1322.6px;width:115.8px;height:56.2px;background:#fff;"></div>
<svg style="position:absolute;left:2322px;top:1322px" width="116" height="60" viewBox="0 0 116 60"><text x="10.6" y="41.3" font-family="'Liberation Sans','DejaVu Sans',sans-serif" font-weight="bold" font-size="42" fill="#0872b9" textLength="54.5" lengthAdjust="spacingAndGlyphs">G2</text><path d="M69.8 3.5L62 16.5L68.3 14.2L67.3 41.6L77.7 15.8L70.6 18z" fill="#ec5b27"/><path d="M80.5 17.6H103L98.5 23H76.8zM77 26.9H96.5L92.5 32.3H73.5zM73.5 36.2H94.6L90.3 41.6H70z" fill="#f3901d"/><text x="72" y="12.6" font-family="'Liberation Sans','DejaVu Sans',sans-serif" font-weight="bold" font-size="6.6" fill="#ec5b27" textLength="29.5" lengthAdjust="spacingAndGlyphs">FRANCE</text><text x="17.5" y="46.6" font-family="'Liberation Sans','DejaVu Sans',sans-serif" font-size="3.3" fill="#2a8fd0" textLength="74" lengthAdjust="spacingAndGlyphs">Optimisation des ressources énergétiques</text></svg>
<div id="title" style="position:absolute;left:1990px;top:68px;width:416px;height:30px;background:#fff;border-radius:0 0 7px 0;box-shadow:2.5px 0.5px 3px -0.5px rgba(0,0,0,.33);"></div>
<div style="position:absolute;left:1988px;top:62px;width:418px;height:9px;background:linear-gradient(#fff,#fff);"></div>
<div class="gs" style="position:absolute;left:2109.5px;top:63.6px;font:bold 24px/36px 'DejaVu Sans Condensed','DejaVu Sans',sans-serif;font-stretch:condensed;color:#000;white-space:pre;letter-spacing:0.33px">LHB-site-L05Q</div>
<div class="stat" style="left:1990px;top:106px"><span style="left:64px">Consommation: 58 kWh</span></div>
<div class="stat" style="left:1990px;top:176px"><span style="left:125.5px">P Max :  7 kW</span></div>
<div class="stat" style="left:1990px;top:246px"><span style="left:132.5px">P min : 1 kW</span></div>
<div class="stat" style="left:560.5px;top:804px"><span style="left:56.0px">Consommation: 561 kWh</span></div>
<div class="stat" style="left:1098.3px;top:804px"><span style="left:117.20000000000005px">P Max :  57 kW</span></div>
<div class="stat" style="left:1608.3px;top:804px"><span style="left:132.20000000000005px">P min : 0 kW</span></div>
<div style="position:absolute;left:1048px;top:542.5px;width:522px;height:69.4px;border-radius:11px;background:rgba(255,255,255,.9);"></div>
<div class="gs" style="position:absolute;left:1136px;top:556px;font:bold 30px/44px 'DejaVu Sans Condensed','DejaVu Sans',sans-serif;font-stretch:condensed;color:#0c1210;white-space:pre">dimanche 12 avril 2026</div>
<div class="edge-r"></div><div class="edge-b"></div><div class="edge-b" style="bottom:1px;height:1px;opacity:.3"></div>
</body></html>
